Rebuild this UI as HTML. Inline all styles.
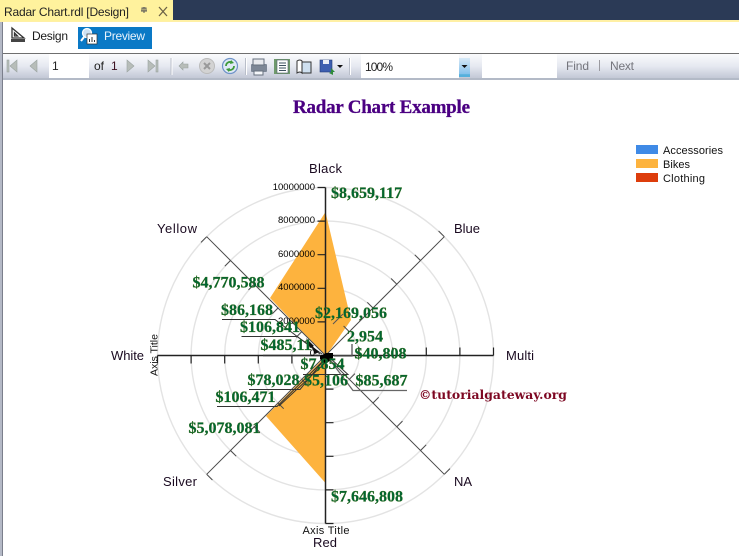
<!DOCTYPE html>
<html><head><meta charset="utf-8"><style>
html,body{margin:0;padding:0;background:#fff;width:739px;height:556px;overflow:hidden}
svg{display:block}
.ui{font-family:"Liberation Sans",sans-serif;font-size:12px}
.v{font-family:"Liberation Serif",serif;font-weight:bold;font-size:16px;fill:#006633;stroke:#3f6a12;stroke-width:.3px}
.c{font-family:"Liberation Sans",sans-serif;font-size:13px;fill:#1a0a20}
.a{font-family:"Liberation Sans",sans-serif;font-size:9.5px;fill:#000;text-anchor:end}
.l{font-family:"Liberation Sans",sans-serif;font-size:11px;fill:#111}
</style></head><body>
<svg width="739" height="556" viewBox="0 0 739 556" xmlns="http://www.w3.org/2000/svg">
<defs>
<linearGradient id="tb" x1="0" y1="0" x2="0" y2="1"><stop offset="0" stop-color="#fafbfd"/><stop offset=".5" stop-color="#e6e9f1"/><stop offset="1" stop-color="#c3c8d6"/></linearGradient>
<linearGradient id="dd" x1="0" y1="0" x2="0" y2="1"><stop offset="0" stop-color="#d8e9f7"/><stop offset=".85" stop-color="#84c1ec"/><stop offset=".86" stop-color="#55b0dc"/></linearGradient>
</defs>
<rect width="739" height="21" fill="#2b3a56"/>
<rect x="0" y="20" width="739" height="2" fill="#fff0a5"/>
<rect width="173" height="21" fill="#fff29d"/>
<text class="ui" x="4" y="16" fill="#222" textLength="125" font-size="12">Radar Chart.rdl [Design]</text>
<path d="M141 11h6M144 7v6M142 8h4v3h-4z" stroke="#555" fill="none"/>
<path d="M159 7l8 9M167 7l-8 9" stroke="#6b6247" stroke-width="1.3"/>

<rect x="0" y="22" width="2" height="534" fill="#b4b9c6"/>
<rect x="2" y="22" width="1" height="534" fill="#7b7f8c"/>

<path d="M12 28v10h12z M14.500 33v3h3z" fill="none" stroke="#333" stroke-width="1.3"/>
<rect x="11" y="39" width="14" height="3" fill="#444"/>
<text class="ui" x="32" y="40" fill="#1a1a1a" textLength="36">Design</text>
<rect x="78" y="27" width="74" height="22" fill="#0a79c6"/>
<circle cx="87" cy="33" r="4.500" fill="#cfe3f3" stroke="#fff" stroke-width="1.3"/>
<path d="M84 37l-3 4" stroke="#fff" stroke-width="2"/>
<rect x="87" y="34" width="10" height="10" fill="#fff" stroke="#333" stroke-width=".7"/>
<path d="M89.500 42v-3M92 42v-5M94.500 42v-2" stroke="#333"/>
<text class="ui" x="104" y="40" fill="#e8f3fc" textLength="41">Preview</text>

<rect x="3" y="53" width="736" height="1" fill="#6f6f6f"/>
<rect x="3" y="54" width="736" height="24" fill="url(#tb)"/>
<rect x="3" y="78" width="736" height="2" fill="#b3bac7"/>
<rect x="49" y="54" width="40" height="24" fill="#fff"/>
<rect x="361" y="54" width="98" height="24" fill="#fff"/>
<rect x="482" y="54" width="75" height="24" fill="#fff"/>
<rect x="459" y="58" width="11" height="19" fill="url(#dd)"/>
<path d="M461.500 65h6l-3 3z" fill="#111"/>

<g fill="#b7bdb9" stroke="#9aa3a0" stroke-width=".6">
<rect x="7" y="60" width="2" height="12"/><path d="M17 60v12l-7-6z"/>
<path d="M37 60v12l-7-6z"/>
<path d="M127 60v12l7-6z"/>
<path d="M148 60v12l7-6z"/><rect x="156" y="60" width="2" height="12"/>
<path d="M179 66l4-4v2h5v4h-5v2z"/>
</g>
<circle cx="207" cy="66" r="7.500" fill="#d3d3d3" stroke="#bbb"/>
<path d="M204 63l6 6M210 63l-6 6" stroke="#999" stroke-width="2"/>
<circle cx="230" cy="66" r="7.500" fill="#dfe9f6" stroke="#6f93c8" stroke-width="1.2"/>
<path d="M226 66a4 4 0 0 1 6-3.500M234 66a4 4 0 0 1-6 3.500" fill="none" stroke="#3f9b3a" stroke-width="1.8"/>
<path d="M231 60l3 3-4 1zM229 72l-3-3 4-1z" fill="#3f9b3a"/>
<g stroke="#b9bec9"><path d="M171 58v17M245.500 58v17M349.500 58v17"/></g>
<g stroke="#fff"><path d="M172 58v17M246.500 58v17M350.500 58v17"/></g>

<rect x="251" y="64" width="16" height="8" rx="1" fill="#7d8796"/>
<rect x="253" y="59" width="11" height="6" fill="#e8eaee" stroke="#66707e"/>
<rect x="254" y="71" width="9" height="4" fill="#f5f7fa" stroke="#66707e"/>
<rect x="274" y="59" width="16" height="15" fill="#6f9a6c"/>
<rect x="277" y="60" width="11" height="13" fill="#fff" stroke="#55626f" stroke-width=".6"/>
<path d="M279 63h7M279 65.500h7M279 68h7M279 70.500h7" stroke="#3d5060"/>
<path d="M297 61q3-2 5 0v12q-2-2-5 0z" fill="#fff" stroke="#333"/>
<path d="M302 62h9v11h-9z" fill="#cfe0f0" stroke="#333"/>
<rect x="320" y="60" width="12" height="12" fill="#3d5fb0" stroke="#243c78" stroke-width=".6"/>
<rect x="323" y="60" width="6" height="4" fill="#e8edf6"/>
<path d="M331 68l4 4h-2v3l-2-1-2-1 2-1z" fill="#2f8a3a"/>
<path d="M337 65h6l-3 3z" fill="#111"/>

<text class="ui" x="52" y="70" fill="#222">1</text>
<text class="ui" x="94" y="70" fill="#222">of</text>
<text class="ui" x="111" y="70" fill="#3b1020">1</text>
<text class="ui" x="365" y="71" fill="#222" textLength="28">100%</text>
<text class="ui" x="566" y="70" fill="#74757c" textLength="23">Find</text>
<rect x="599" y="60" width="1" height="11" fill="#9a9aa0"/>
<text class="ui" x="610" y="70" fill="#74757c" textLength="24">Next</text>

<text x="293" y="113" font-family="'Liberation Serif',serif" font-weight="bold" font-size="19" fill="#4b0082" stroke="#4b0082" stroke-width=".3" textLength="177">Radar Chart Example</text>

<rect x="636" y="145" width="22" height="9" fill="#3f8ae6"/>
<rect x="636" y="159" width="22" height="9" fill="#fdb33e"/>
<rect x="636" y="173" width="22" height="9" fill="#dd3d0c"/>
<text class="l" x="663" y="154" textLength="60">Accessories</text>
<text class="l" x="663" y="168" textLength="27">Bikes</text>
<text class="l" x="663" y="182" textLength="42">Clothing</text>

<g fill="none" stroke="#e3e3e3" stroke-width="1.4">
<circle cx="325.500" cy="355.500" r="33.600"/><circle cx="325.500" cy="355.500" r="67.200"/><circle cx="325.500" cy="355.500" r="100.800"/><circle cx="325.500" cy="355.500" r="134.400"/><circle cx="325.500" cy="355.500" r="168"/>
</g>
<path d="M325.500 212L351 320L326 356L266 416L325.500 483ZM325.500 212L270 298L326 356Z" fill="#fdb33e"/>

<g stroke="#4a4a4a" stroke-width="1" fill="none">
<path d="M325.500 355.500L444.300 236.700M325.500 355.500L444.300 474.300M325.500 355.500L206.700 474.300M325.500 355.500L206.700 236.700"/>
<path d="M349.300 331.700l-5.700-5.700M373 308l-5.700-5.700M396.800 284.200l-5.700-5.700M420.500 260.500l-5.700-5.700M444.300 236.700l-5.700-5.700"/>
<path d="M349.300 379.300l5.700-5.700M373 403l5.700-5.700M396.800 426.800l5.700-5.700M420.500 450.500l5.700-5.700M444.300 474.300l5.700-5.700"/>
<path d="M301.700 379.300l5.700 5.700M278 403l5.700 5.700M254.200 426.800l5.700 5.700M230.500 450.500l5.700 5.700M206.700 474.300l5.700 5.700"/>
<path d="M301.700 331.700l-5.700 5.700M278 308l-5.700 5.700M254.200 284.200l-5.700 5.700M230.500 260.500l-5.700 5.700M206.700 236.700l-5.700 5.700"/>
</g>
<g stroke="#222" stroke-width="1.200" fill="none">
<path d="M325.500 187.500V523.500M157.500 355.500H493.500" stroke-width="1.500"/>
<path d="M325.500 321.900h-8M325.500 288.300h-8M325.500 254.700h-8M325.500 221.100h-8M325.500 187.500h-8"/>
<path d="M325.500 389.100h8M325.500 422.700h8M325.500 456.300h8M325.500 489.900h8M325.500 523.500h8"/>
<path d="M291.900 355.500v8M258.300 355.500v8M224.700 355.500v8M191.100 355.500v8M157.500 355.500v8"/>
<path d="M359.100 355.500v-8M392.700 355.500v-8M426.300 355.500v-8M459.900 355.500v-8M493.500 355.500v-8"/>
</g>

<g fill="none" stroke="#333" stroke-width="1">
<path d="M222 319.500H275L320 354"/>
<path d="M241.500 336.500H297L322 354"/>
<path d="M263 355.500H320" stroke-width="1.600"/>
<path d="M249 389.500H300L324 360"/>
<path d="M217 406.500H277L322 362M279 406L324 364"/>
<path d="M303 374.500H348L330 358"/>
<path d="M407 390.500H353L330 360" stroke="#666" stroke-width="1.300"/>
<path d="M352 344V356H334" stroke="#555" stroke-width="1.300"/>
<path d="M343 314L333 324" stroke="#555"/>
</g>
<path d="M311 345l8 7-4 2zM306 338l8 8-4 2z" fill="#111"/>
<path d="M320 356l6-3 7 0 0 5-6 5-3 0-4-4z" fill="#000"/>

<g class="t">
<text class="a" x="315" y="190">10000000</text>
<text class="a" x="315" y="223">8000000</text>
<text class="a" x="315" y="257">6000000</text>
<text class="a" x="315" y="290">4000000</text>
<text class="a" x="315" y="324">2000000</text>
<text class="a" x="315" y="356">0</text>
</g>

<text class="c" x="309" y="173" textLength="33">Black</text>
<text class="c" x="157" y="233" textLength="40">Yellow</text>
<text class="c" x="454" y="233" textLength="26">Blue</text>
<text class="c" x="506" y="360" textLength="28">Multi</text>
<text class="c" x="111" y="360" textLength="33">White</text>
<text class="c" x="163" y="486" textLength="34">Silver</text>
<text class="c" x="454" y="486" textLength="18">NA</text>
<text class="c" x="313" y="547" textLength="24">Red</text>
<text x="302.500" y="534" font-family="'Liberation Sans',sans-serif" font-size="11" fill="#111" textLength="47">Axis Title</text>
<text transform="translate(157.500 376) rotate(-90)" font-family="'Liberation Sans',sans-serif" font-size="10.500" fill="#111" textLength="42">Axis Title</text>

<text class="v" x="331" y="198">$8,659,117</text>
<text class="v" x="192.500" y="287.500">$4,770,588</text>
<text class="v" x="221" y="315">$86,168</text>
<text class="v" x="240" y="332">$106,841</text>
<text class="v" x="260.500" y="350">$485,11</text>
<text class="v" x="315" y="318">$2,169,056</text>
<text class="v" x="347" y="341.500">2,954</text>
<text class="v" x="354.500" y="358.500">$40,808</text>
<text class="v" x="300.500" y="369">$7,854</text>
<text class="v" x="247.500" y="385">$78,028</text>
<text class="v" x="304" y="385.500">$5,106</text>
<text class="v" x="355.500" y="385.500">$85,687</text>
<text class="v" x="215.500" y="402">$106,471</text>
<text class="v" x="188.500" y="433">$5,078,081</text>
<text class="v" x="331" y="501.500">$7,646,808</text>

<text x="419" y="399" font-family="'DejaVu Serif',serif" font-weight="bold" font-size="12.500" fill="#7d0722" textLength="148" lengthAdjust="spacingAndGlyphs">©tutorialgateway.org</text>
</svg>
</body></html>
